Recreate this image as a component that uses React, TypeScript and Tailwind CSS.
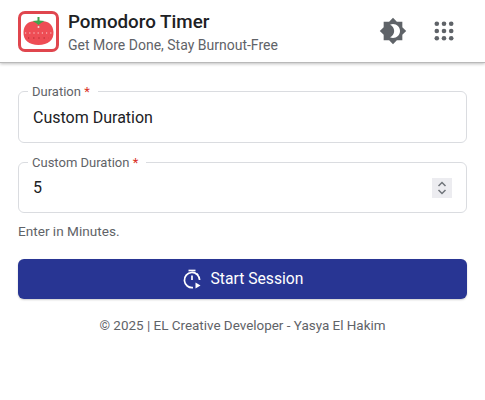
import { MdBrightness4 } from "react-icons/md";

const font = "font-['Roboto','Noto_Sans',sans-serif]";

const TomatoLogo = () => (
  <div className="w-[41px] h-[41px] rounded-[7px] border-[3px] border-[#e0464e] bg-white flex items-center justify-center shrink-0">
    <svg viewBox="0 0 35 35" className="w-[35px] h-[35px]">
      <path d="M17.5 8C25 5.5 32 9 32.5 18C33 26 27 31 17.5 31C8 31 2 26 2.5 18C3 9 10 5.5 17.5 8Z" fill="#ee4d55" />
      <path d="M16.5 3h2v3.5l5 .5-3.5 2-2.5 2-2.5-2-3.5-2 5-.5z" fill="#3fa34d" />
      <circle cx="17.5" cy="13" r="1" fill="#fbd5d7" />
      <path d="M4 19h27" stroke="#fbd5d7" strokeWidth="1.2" strokeDasharray="1.2 3" />
      <path d="M7 24h21" stroke="#a8262d" strokeWidth="1" strokeDasharray="1.2 4" />
    </svg>
  </div>
);

const AppsDots = () => (
  <svg viewBox="0 0 20 20" className="w-5 h-5" fill="#5f6368">
    {[2.8, 10, 17.2].map((y) =>
      [2.8, 10, 17.2].map((x) => <circle key={`${x}-${y}`} cx={x} cy={y} r="2.3" />)
    )}
  </svg>
);

const TimerPlay = () => (
  <svg viewBox="0 0 20 20" className="w-[20px] h-[20px]" fill="none" stroke="white" strokeWidth="1.7">
    <path d="M6.5 1.5h7" />
    <path d="M10 6.5v4.5" />
    <path d="M14.5 4.5l1.6 1.6" />
    <path d="M11 18.6A7.6 7.6 0 1 1 17.6 11" />
    <path d="M13.5 13.5l5 3-5 3z" fill="white" stroke="none" />
  </svg>
);

const Field = ({ label, value, children, h, up }: { label: string; value: string; children?: React.ReactNode; h: string; up: string }) => (
  <fieldset className={`${h} border border-[#dadce0] rounded-[6px] px-[9px] flex items-center min-w-0`}>
    <legend className="pl-[4px] pr-[8px] text-[13px] leading-[17px] text-[#5f6368]">
      {label} <span className="text-[#d93025]">*</span>
    </legend>
    <div className={`flex items-center justify-between w-full pl-[5px] pr-[5px] ${up}`}>
      <span className="text-[16px] leading-6 text-[#202124]">{value}</span>
      {children}
    </div>
  </fieldset>
);

export default function App() {
  return (
    <div className={`${font} w-[485px] h-[400px] bg-white`}>
      <header className="h-[63px] flex items-center justify-between pl-[18px] pr-[31px] border-b border-[#b9b9b9] shadow-[0_1px_3px_rgba(0,0,0,0.25)]">
        <div className="flex items-center gap-[9px]">
          <TomatoLogo />
          <div className="pt-[3px]">
            <h1 className="text-[18.8px] leading-[24px] font-medium text-[#202124]">Pomodoro Timer</h1>
            <p className="text-[14px] leading-[20px] mt-[1px] text-[#5f6368]">Get More Done, Stay Burnout-Free</p>
          </div>
        </div>
        <div className="flex items-center gap-[27px]">
          <MdBrightness4 className="w-[28px] h-[28px] text-[#5f6368]" />
          <AppsDots />
        </div>
      </header>

      <main className="px-[18px] pt-[20px]">
        <Field label="Duration" value="Custom Duration" h="h-[60px]" up="-mt-[6px]" />
        <div className="mt-[11px]">
          <Field label="Custom Duration" value="5" h="h-[59px]" up="-mt-[8px]">
            <span className="w-[20px] h-[20px] bg-[#ececf0] flex items-center justify-center">
              <svg viewBox="0 0 12 16" className="w-3 h-4" fill="none" stroke="#70757a" strokeWidth="1.5">
                <path d="M2.5 6L6 2.5 9.5 6" />
                <path d="M2.5 10L6 13.5 9.5 10" />
              </svg>
            </span>
          </Field>
        </div>
        <p className="mt-[8px] text-[13.6px] leading-[20px] text-[#5f6368]">Enter in Minutes.</p>
        <button className="mt-[18px] w-full h-[40px] rounded-[6px] bg-[#283593] flex items-center justify-center gap-[9px] text-white text-[15.7px] shadow-[0_1px_2px_rgba(0,0,0,0.2)]">
          <TimerPlay />
          Start Session
        </button>
        <p className="mt-[17px] text-center text-[13.45px] leading-[20px] text-[#5f6368]">
          © 2025 | EL Creative Developer - Yasya El Hakim
        </p>
      </main>
    </div>
  );
}
